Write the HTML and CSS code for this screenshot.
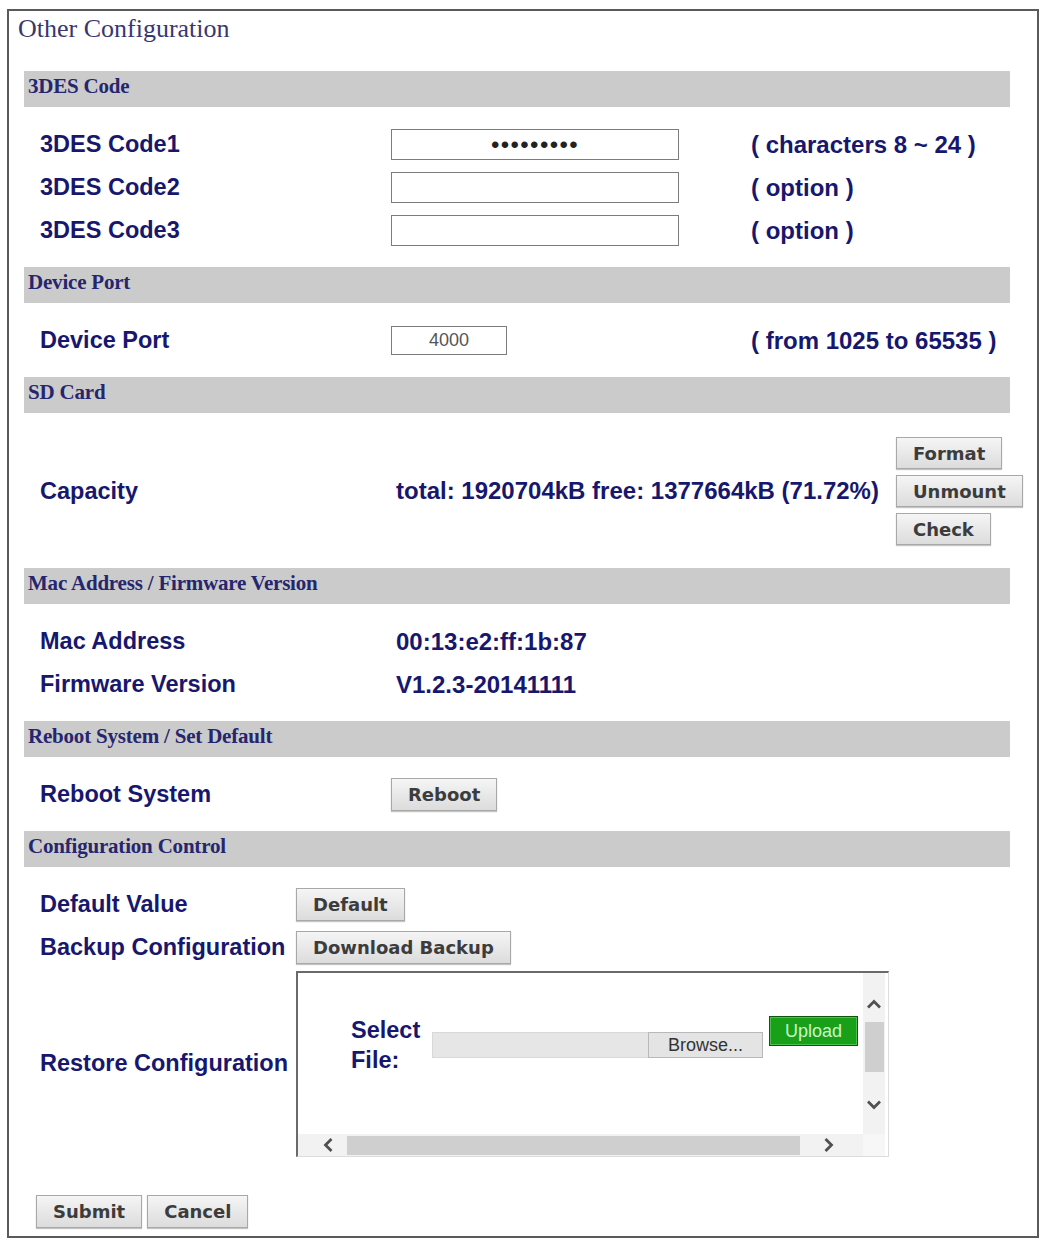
FILE: index.html
```html
<!DOCTYPE html>
<html lang="en">
<head>
  <meta charset="UTF-8">
  <title>Other Configuration</title>
  <link rel="stylesheet" href="styles.css">
</head>
<body>
  <div class="panel">
    <div class="title">Other Configuration</div>

    <!-- 3DES -->
    <div class="section">
      <div class="bar">3DES Code</div>
      <div class="rows grid3">
        <div class="label">3DES Code1</div>
        <div><input type="password" class="code pass" value="abcdefghi"></div>
        <div class="label hint">( characters 8 ~ 24 )</div>

        <div class="label">3DES Code2</div>
        <div><input type="password" class="code pass"></div>
        <div class="label hint">( option )</div>

        <div class="label">3DES Code3</div>
        <div><input type="password" class="code pass"></div>
        <div class="label hint">( option )</div>
      </div>
    </div>

    <div class="section">
      <div class="bar">Device Port</div>
      <div class="rows grid3">
        <div class="label">Device Port</div>
        <div><input type="text" class="port" value="4000"></div>
        <div class="label hint">( from 1025 to 65535 )</div>
      </div>
    </div>

    <div class="section">
      <div class="bar">SD Card</div>
      <div class="rows capacity">
        <div class="label cap-label">Capacity</div>
        <div class="label text">total: 1920704kB free: 1377664kB (71.72%)</div>
        <div class="sd-buttons">
          <button class="btn sd">Format</button>
          <button class="btn sd">Unmount</button>
          <button class="btn sd">Check</button>
        </div>
      </div>
    </div>

    <div class="section">
      <div class="bar">Mac Address / Firmware Version</div>
      <div class="rows grid3">
        <div class="label">Mac Address</div>
        <div class="label text">00:13:e2:ff:1b:87</div>
        <div></div>

        <div class="label">Firmware Version</div>
        <div class="label text">V1.2.3-20141111</div>
        <div></div>
      </div>
    </div>

    <div class="section">
      <div class="bar">Reboot System / Set Default</div>
      <div class="rows grid3">
        <div class="label">Reboot System</div>
        <div><button class="btn">Reboot</button></div>
        <div></div>
      </div>
    </div>

    <div class="section">
      <div class="bar">Configuration Control</div>
      <div class="rows control">
        <div class="label">Default Value</div>
        <div><button class="btn">Default</button></div>

        <div class="label">Backup Configuration</div>
        <div><button class="btn">Download Backup</button></div>

        <div class="label">Restore Configuration</div>
        <div class="upload-frame">
          <div class="upload-body">
            <div class="label select-label">Select File:</div>
            <div class="file">
              <span class="file-name"></span>
              <span class="browse">Browse...</span>
            </div>
            <button class="upload">Upload</button>
          </div>
          <div class="vscroll">
            <svg class="arrow-up" width="16" height="10" viewBox="0 0 16 10"><polyline points="2,8.5 8,2.5 14,8.5" fill="none" stroke="#505050" stroke-width="2.8"/></svg>
            <div class="vthumb"></div>
            <div class="fill"></div>
            <svg class="arrow-down" width="16" height="10" viewBox="0 0 16 10"><polyline points="2,1.5 8,7.5 14,1.5" fill="none" stroke="#505050" stroke-width="2.8"/></svg>
          </div>
          <div class="hscroll">
            <svg width="10" height="16" viewBox="0 0 10 16"><polyline points="8.5,2 2.5,8 8.5,14" fill="none" stroke="#505050" stroke-width="2.8"/></svg>
            <div class="hthumb"></div>
            <div class="fill"></div>
            <svg width="10" height="16" viewBox="0 0 10 16"><polyline points="1.5,2 7.5,8 1.5,14" fill="none" stroke="#505050" stroke-width="2.8"/></svg>
          </div>
          <div class="corner"></div>
        </div>
      </div>
    </div>

    <div class="footer">
      <button class="btn">Submit</button>
      <button class="btn">Cancel</button>
    </div>
  </div>
</body>
</html>
```

FILE: styles.css
```css
body {
  margin: 0;
  font-family: "Liberation Sans", Arial, sans-serif;
  background: #fff;
}

/* outer frame */
.panel {
  box-sizing: border-box;
  width: 1032px;
  margin: 9px 0 0 7px;
  border: 2px solid #5a5a5a;
  padding: 0 27px 8px 9px;
}

.title {
  font-family: "Liberation Serif", serif;
  font-size: 26px;
  line-height: 30px;
  color: #383870;
  margin: 3px 0 27px;
}

.section {
  margin-left: 6px;
}

/* grey section header */
.bar {
  background: #cbcbcb;
  height: 36px;
  box-sizing: border-box;
  line-height: 31px;
  padding-left: 4px;
  font-family: "Liberation Serif", serif;
  font-weight: bold;
  font-size: 21px;
  letter-spacing: -0.2px;
  color: #26266e;
}

.rows {
  padding: 16px 0 15px 16px;
}

.grid3 {
  display: grid;
  grid-template-columns: 351px 360px auto;
  grid-auto-rows: 43px;
  align-items: center;
}

.label {
  font-weight: bold;
  font-size: 23.5px;
  color: #17176e;
  white-space: nowrap;
}

.hint,
.text {
  font-size: 24px;
}

.text {
  padding-left: 5px;
}

input.code {
  box-sizing: border-box;
  width: 288px;
  height: 31px;
  border: 1px solid #7c7c7c;
  padding: 0;
  text-align: center;
  display: block;
}

input.pass {
  font-size: 24px;
  letter-spacing: 1.4px;
  color: #222;
}

input.port {
  box-sizing: border-box;
  width: 116px;
  height: 29px;
  border: 1px solid #7c7c7c;
  padding: 0;
  font-family: "Liberation Sans", Arial, sans-serif;
  font-size: 18px;
  color: #555;
  text-align: center;
  display: block;
}

/* buttons */
.btn {
  box-sizing: border-box;
  height: 33px;
  padding: 0 16px;
  border: 1px solid #a8a8a8;
  background: linear-gradient(#f5f5f5, #dcdcdc);
  box-shadow: 0 1px 1px #c4c4c4;
  font-family: "DejaVu Sans", Verdana, sans-serif;
  font-weight: bold;
  font-size: 18px;
  color: #3c3c3c;
  display: block;
}

/* SD card row */
.capacity {
  display: flex;
  align-items: center;
  height: 124px;
  box-sizing: content-box;
}

.cap-label {
  flex: none;
  width: 351px;
}

.capacity .text {
  flex: none;
}

.sd-buttons {
  flex: none;
  display: flex;
  flex-direction: column;
  align-items: flex-start;
  gap: 6px;
  margin-left: 17px;
}

.btn.sd {
  height: 32px;
}

/* configuration control */
.control {
  display: grid;
  grid-template-columns: 256px auto;
  grid-template-rows: 43px 43px auto;
  align-items: center;
  padding-bottom: 0;
}

.upload-frame {
  box-sizing: border-box;
  width: 593px;
  height: 186px;
  margin-top: 2px;
  border-style: solid;
  border-width: 2px 1px 1px 2px;
  border-color: #6a6a6a #dcdcdc #dcdcdc #6a6a6a;
  display: grid;
  grid-template-columns: 1fr 22px;
  grid-template-rows: 1fr 22px;
  padding-right: 3px;
}

.upload-body {
  display: flex;
  align-items: center;
  align-self: start;
  padding: 42px 0 0 53px;
}

.select-label {
  white-space: normal;
  width: 81px;
  line-height: 30px;
}

.file {
  display: flex;
  width: 331px;
  height: 26px;
}

.file-name {
  flex: 1;
  background: #e6e6e6;
  border: 1px solid #d8d8d8;
  border-right: none;
}

.browse {
  box-sizing: border-box;
  width: 115px;
  background: #e4e4e4;
  border: 1px solid #b8b8b8;
  font-size: 18px;
  line-height: 24px;
  color: #333;
  text-align: center;
}

.upload {
  align-self: flex-start;
  margin: 1px 0 0 6px;
  width: 89px;
  height: 30px;
  border: 1px solid #0d560d;
  box-shadow: inset 0 0 0 1px #4cc04c;
  background: #19a019;
  color: #c9f5c9;
  font-family: "Liberation Sans", Arial, sans-serif;
  font-size: 18px;
  padding: 0;
}

/* fake scrollbars of the upload frame */
.vscroll {
  display: flex;
  flex-direction: column;
  align-items: center;
  background: #f2f2f2;
  padding: 26px 0 24px;
}

.arrow-up {
  flex: none;
}

.vthumb {
  flex: none;
  width: 19px;
  height: 50px;
  margin-top: 13px;
  background: #cfcfcf;
}

.fill {
  flex: 1;
}

.arrow-down {
  flex: none;
}

.hscroll {
  display: flex;
  align-items: center;
  background: #f2f2f2;
  padding: 0 29px 0 25px;
}

.hthumb {
  width: 453px;
  height: 19px;
  margin-left: 14px;
  background: #cfcfcf;
}

.corner {
  background: #f7f7f7;
}

.footer {
  display: flex;
  gap: 5px;
  margin: 38px 0 0 18px;
}
```
